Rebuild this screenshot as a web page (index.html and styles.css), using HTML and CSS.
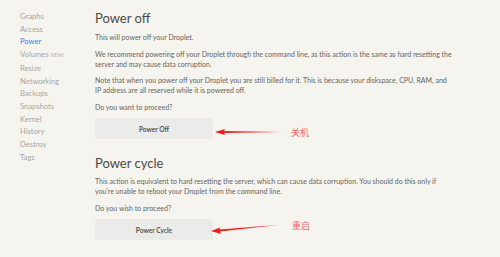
FILE: index.html
```html
<!DOCTYPE html>
<html>
<head>
<meta charset="utf-8">
<link rel="stylesheet" href="styles.css">
</head>
<body>
<div class="page">
  <nav class="sidebar">
    <a class="nav-item">Graphs</a>
    <a class="nav-item">Access</a>
    <a class="nav-item active">Power</a>
    <a class="nav-item">Volumes <span class="badge">NEW!</span></a>
    <a class="nav-item">Resize</a>
    <a class="nav-item">Networking</a>
    <a class="nav-item">Backups</a>
    <a class="nav-item">Snapshots</a>
    <a class="nav-item">Kernel</a>
    <a class="nav-item">History</a>
    <a class="nav-item">Destroy</a>
    <a class="nav-item">Tags</a>
  </nav>
  <main class="content">
    <section class="section">
      <h2 class="title">Power off</h2>
      <p class="text">This will power off your Droplet.</p>
      <p class="text">We recommend powering off your Droplet through the command line, as this action is the same as hard resetting the<br>server and may cause data corruption.</p>
      <p class="text">Note that when you power off your Droplet you are still billed for it. This is because your diskspace, CPU, RAM, and<br>IP address are all reserved while it is powered off.</p>
      <p class="text">Do you want to proceed?</p>
      <div class="action-row">
        <button class="btn">Power Off</button>
        <svg class="arrow arrow-off" width="72" height="12" viewBox="0 0 72 12">
          <defs>
            <linearGradient id="g1" x1="0" x2="1" y1="0" y2="0">
              <stop offset="0" stop-color="#f01818"/>
              <stop offset="0.75" stop-color="#f43a3a"/>
              <stop offset="1" stop-color="#f8a0a0" stop-opacity="0.4"/>
            </linearGradient>
          </defs>
          <polygon points="0,6 10,3 9,5 70,6 9,7 10,9" fill="url(#g1)"/>
        </svg>
        <span class="note">关机</span>
      </div>
    </section>
    <section class="section second">
      <h2 class="title">Power cycle</h2>
      <p class="text">This action is equivalent to hard resetting the server, which can cause data corruption. You should do this only if<br>you're unable to reboot your Droplet from the command line.</p>
      <p class="text">Do you wish to proceed?</p>
      <div class="action-row">
        <button class="btn">Power Cycle</button>
        <svg class="arrow arrow-cycle" width="74" height="14" viewBox="0 0 74 14">
          <defs>
            <linearGradient id="g2" x1="0" x2="1" y1="0" y2="0">
              <stop offset="0" stop-color="#f01818"/>
              <stop offset="0.75" stop-color="#f43a3a"/>
              <stop offset="1" stop-color="#f8a0a0" stop-opacity="0.4"/>
            </linearGradient>
          </defs>
          <polygon points="0,10 9,6.5 8.5,8.5 72,3.5 9,10.5 10,13" fill="url(#g2)"/>
        </svg>
        <span class="note note-cycle">重启</span>
      </div>
    </section>
  </main>
</div>
</body>
</html>
```
FILE: styles.css
```css
html, body {
  margin: 0;
  padding: 0;
  background: #f6f4ee;
}
body {
  font-family: Lato, "Liberation Sans", "Noto Sans CJK SC", sans-serif;
  color: #6b6b6b;
}
.page {
  display: flex;
  width: 500px;
  height: 257px;
  overflow: hidden;
}
.sidebar {
  width: 95px;
  padding: 10px 0 0 20px;
  box-sizing: border-box;
  display: flex;
  flex-direction: column;
  flex-shrink: 0;
}
.nav-item {
  font-size: 7.6px;
  line-height: 12.7px;
  color: #a6a6a6;
  white-space: nowrap;
}
.nav-item.active {
  color: #3f7ef4;
}
.badge {
  font-size: 5px;
  letter-spacing: 0.2px;
  color: #b2b2b2;
}
.content {
  width: 395px;
  padding-top: 9px;
}
.title {
  margin: 0 0 5px;
  font-weight: 400;
  font-size: 13px;
  line-height: 18px;
  color: #4a4a4a;
}
.text {
  margin: 0 0 6.5px;
  font-size: 7px;
  line-height: 10px;
  color: #646464;
}
.action-row {
  display: flex;
  align-items: center;
}
.btn {
  width: 118px;
  height: 21px;
  border: none;
  background: #ebebea;
  font-family: Lato, "Liberation Sans", sans-serif;
  font-size: 6.6px;
  font-weight: 700;
  color: #555;
  padding: 0;
}
.arrow {
  display: block;
  flex-shrink: 0;
}
.arrow-off {
  margin: 7px 0 0 2px;
}
.arrow-cycle {
  margin: -4px 0 0 -2px;
}
.note {
  font-family: "Noto Sans CJK SC", sans-serif;
  font-size: 9px;
  color: #f06a6a;
  margin: 7px 0 0 4px;
}
.note-cycle {
  margin: -9px 0 0 7px;
}
.second {
  margin-top: 15px;
}
.second .title {
  margin-bottom: 4px;
}
```
